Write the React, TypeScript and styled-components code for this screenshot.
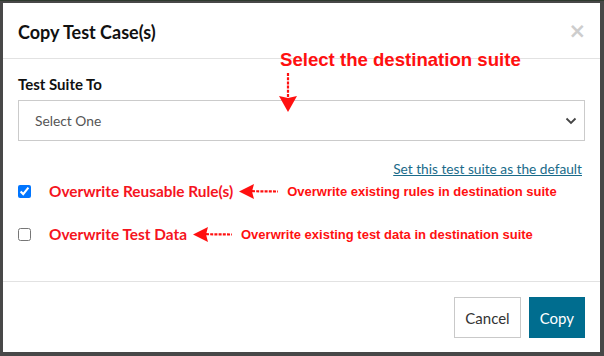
import React, { useState } from "react"
import styled, { createGlobalStyle } from "styled-components"

const GlobalStyle = createGlobalStyle`
  html, body {
    margin: 0;
    padding: 0;
    background: #484848;
  }
  body {
    font-family: Lato, "Open Sans", sans-serif;
  }
`

const Backdrop = styled.div`
  width: 604px;
  height: 356px;
  box-sizing: border-box;
  padding: 2px 4px 4px 3px;
  background: #484848;
  border-top: 1px solid #2e3a2e;
`

const Dialog = styled.div`
  position: relative;
  background: #fff;
  height: 100%;
  display: flex;
  flex-direction: column;
  color: #222;
`

const Header = styled.div`
  display: flex;
  align-items: center;
  justify-content: space-between;
  height: 55px;
  padding: 0 14px 0 15px;
  border-bottom: 1px solid #e2e2e2;
`

const Title = styled.h4`
  margin: 2px 0 0;
  font-size: 18px;
  font-weight: 700;
  color: #111;
`

const Close = styled.button`
  border: 0;
  background: none;
  padding: 0;
  font-family: "DejaVu Sans", sans-serif;
  font-size: 21px;
  font-weight: 700;
  color: #cdcdcd;
  line-height: 1;
  margin-top: 2px;
  cursor: pointer;
`

const Body = styled.div`
  flex: 1;
  padding: 15px 15px 0 15px;
`

const FieldLabel = styled.label`
  display: block;
  font-size: 15px;
  font-weight: 700;
  line-height: 20px;
  color: #111;
  margin-bottom: 6px;
`

const SelectWrap = styled.div`
  position: relative;
  height: 41px;
`

const Select = styled.select`
  appearance: none;
  width: 100%;
  height: 100%;
  box-sizing: border-box;
  border: 1px solid #cbcbcb;
  border-radius: 0;
  background: #fff;
  padding: 0 16px;
  font-family: Lato, sans-serif;
  font-size: 13.8px;
  color: #555;
  outline: none;
`

const Chevron = styled.svg`
  position: absolute;
  right: 8px;
  top: 17px;
  pointer-events: none;
`

const LinkRow = styled.div`
  display: flex;
  justify-content: flex-end;
  margin-top: 18px;
  padding-right: 3px;
  line-height: 20px;
`

const DefaultLink = styled.a`
  font-size: 13.7px;
  color: #1a6b8a;
  text-decoration: underline;
  cursor: pointer;
`

const OptionRow = styled.div<{ $gap: number }>`
  display: flex;
  align-items: center;
  height: 22px;
  margin-top: ${({ $gap }) => $gap}px;
`

const Check = styled.input`
  width: 13px;
  height: 13px;
  margin: 0 18px 0 0;
`

const OptionLabel = styled.span`
  font-size: 15.4px;
  font-weight: 700;
  color: #f5141e;
`

const Note = styled.span`
  font-family: "Liberation Sans", Arial, sans-serif;
  font-size: 13px;
  font-weight: 700;
  color: #ff1010;
`

const LeftArrow = styled.svg`
  margin: 0 8px 0 5px;
  flex: none;
`

const Callout = styled.div`
  position: absolute;
  left: 277px;
  top: 46px;
  font-family: "Liberation Sans", Arial, sans-serif;
  font-size: 18.6px;
  font-weight: 700;
  color: #ff1010;
`

const DownArrow = styled.svg`
  position: absolute;
  left: 273px;
  top: 68px;
`

const Footer = styled.div`
  display: flex;
  justify-content: flex-end;
  gap: 8px;
  height: 71px;
  box-sizing: border-box;
  padding: 15px 15px 0 0;
  border-top: 1px solid #e2e2e2;
`

const Button = styled.button<{ $primary?: boolean }>`
  height: 41px;
  padding: 0 10px;
  font-family: Lato, sans-serif;
  font-size: 15px;
  border-radius: 0;
  cursor: pointer;
  border: 1px solid ${({ $primary }) => ($primary ? "#006b8d" : "#c9c9c9")};
  background: ${({ $primary }) => ($primary ? "#006d8f" : "#fff")};
  color: ${({ $primary }) => ($primary ? "#fff" : "#333")};
`

const ArrowLeft: React.FC<{ width: number }> = ({ width }) => (
  <LeftArrow width={width} height={17} viewBox={`0 0 ${width} 17`}>
    <path d="M1 8.5 L16 1 L14 8.5 L16 16 Z" fill="#ff1010" />
    <path
      d={`M14 8.2 L${width - 1} 8.5`}
      stroke="#ff1010"
      strokeWidth={2.2}
      strokeDasharray="3 1.2"
    />
  </LeftArrow>
)

const App: React.FC = () => {
  const [rules, setRules] = useState(true)
  const [data, setData] = useState(false)

  return (
    <>
      <GlobalStyle />
      <Backdrop>
        <Dialog>
          <Header>
            <Title>Copy Test Case(s)</Title>
            <Close aria-label="Close">×</Close>
          </Header>
          <Body>
            <FieldLabel>Test Suite To</FieldLabel>
            <SelectWrap>
              <Select defaultValue="">
                <option value="">Select One</option>
              </Select>
              <Chevron width="12" height="8" viewBox="0 0 12 8">
                <path d="M1.5 1.5 L6 6 L10.5 1.5" fill="none" stroke="#444" strokeWidth="1.8" />
              </Chevron>
            </SelectWrap>
            <LinkRow>
              <DefaultLink>Set this test suite as the default</DefaultLink>
            </LinkRow>
            <OptionRow $gap={1}>
              <Check type="checkbox" checked={rules} onChange={() => setRules(!rules)} />
              <OptionLabel>Overwrite Reusable Rule(s)</OptionLabel>
              <ArrowLeft width={41} />
              <Note>Overwrite existing rules in destination suite</Note>
            </OptionRow>
            <OptionRow $gap={21}>
              <Check type="checkbox" checked={data} onChange={() => setData(!data)} />
              <OptionLabel>Overwrite Test Data</OptionLabel>
              <ArrowLeft width={41} />
              <Note>Overwrite existing test data in destination suite</Note>
            </OptionRow>
          </Body>
          <Footer>
            <Button>Cancel</Button>
            <Button $primary>Copy</Button>
          </Footer>
          <Callout>Select the destination suite</Callout>
          <DownArrow width="24" height="42" viewBox="0 0 24 42">
            <path d="M12 2 L12 28" stroke="#ff1010" strokeWidth="2.2" strokeDasharray="3 1.2" />
            <path d="M3 25 L12 27 L21 25 L12 41 Z" fill="#ff1010" />
          </DownArrow>
        </Dialog>
      </Backdrop>
    </>
  )
}

export default App
